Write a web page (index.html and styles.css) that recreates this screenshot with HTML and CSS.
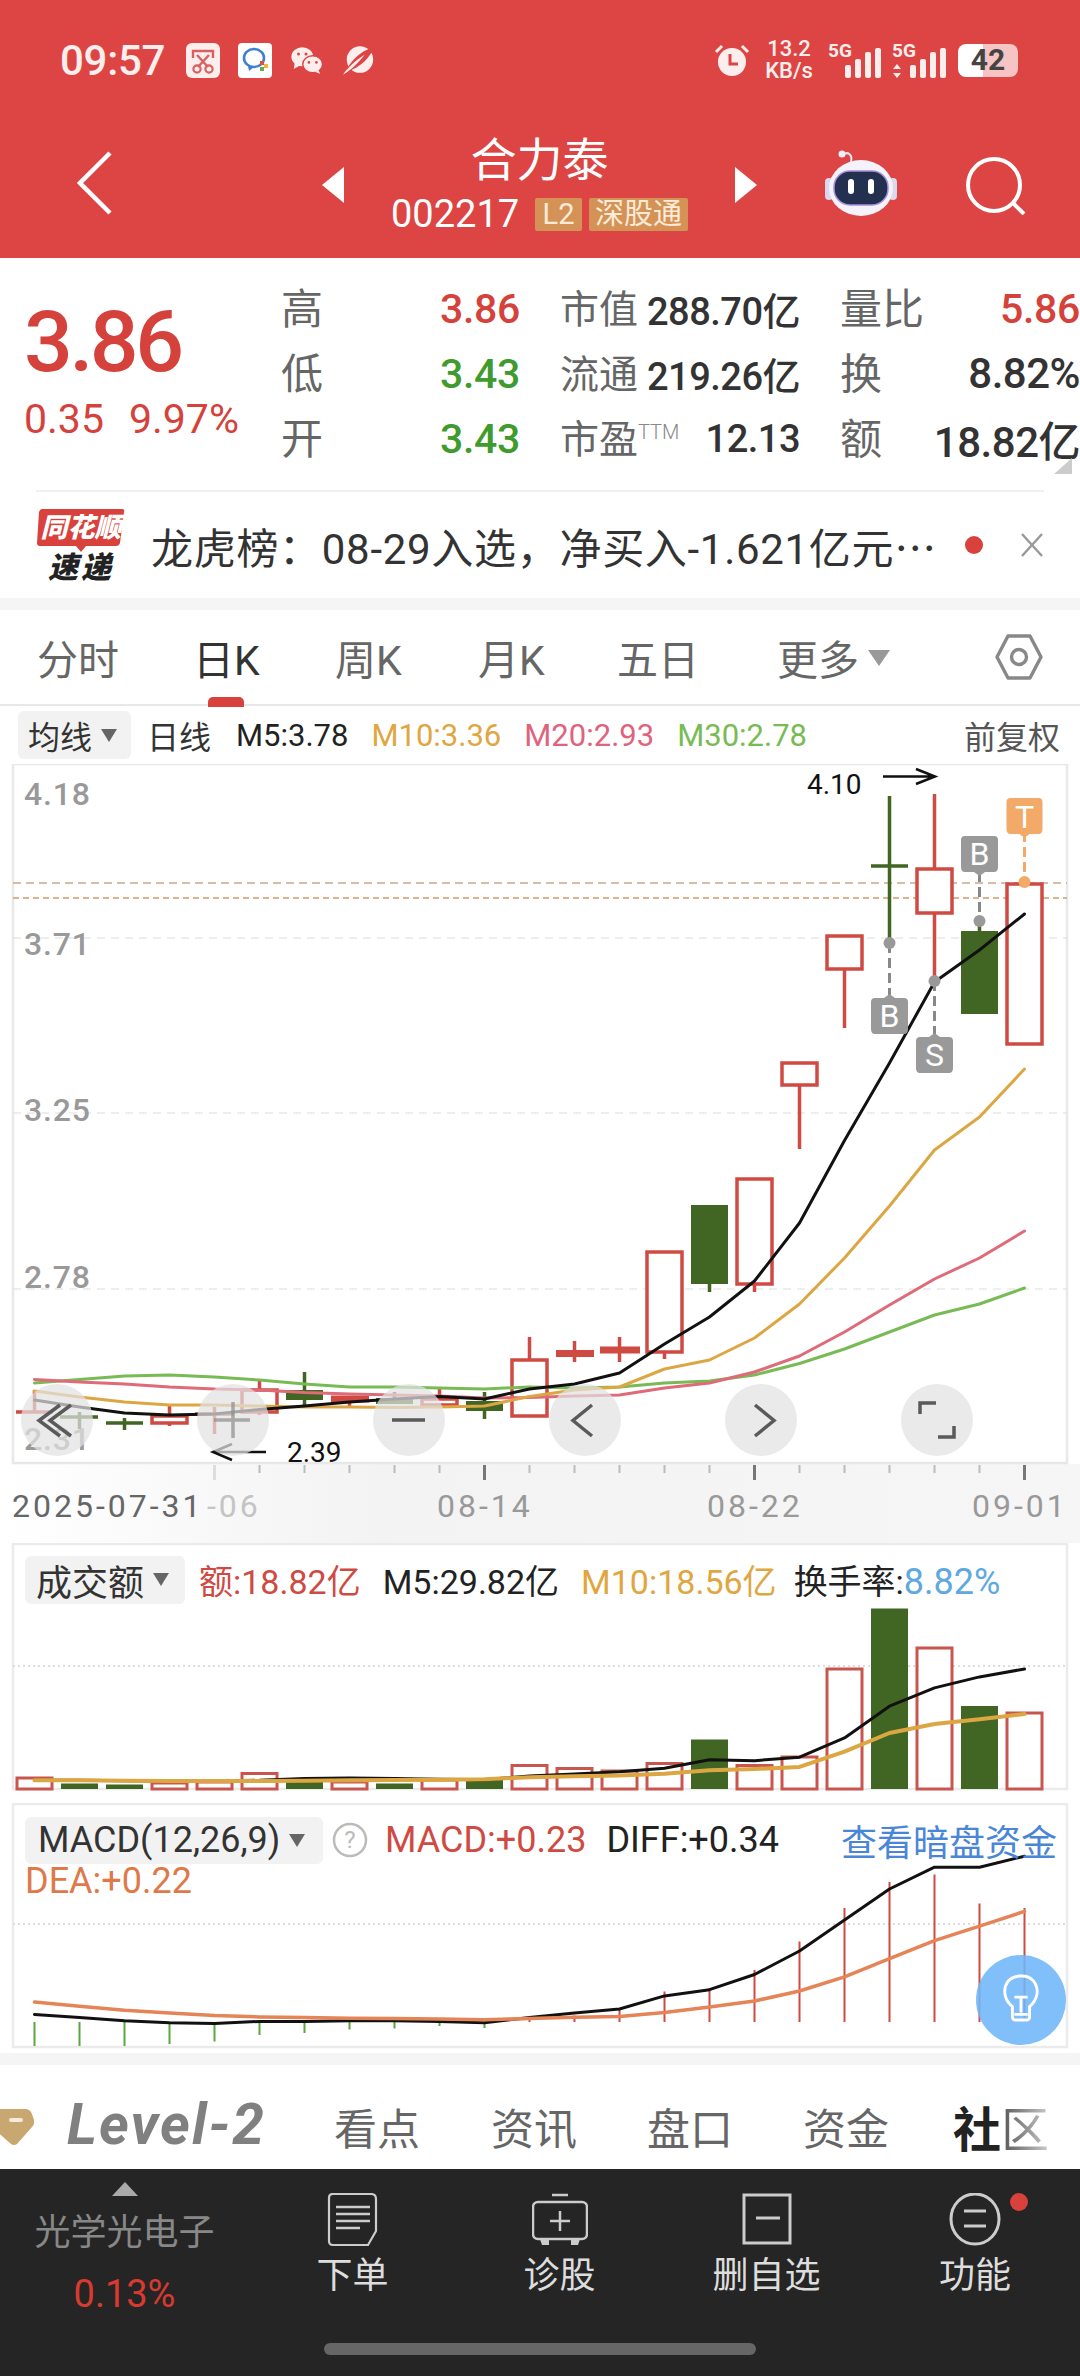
FILE: index.html
```html
<!DOCTYPE html>
<html lang="zh">
<head>
<meta charset="utf-8">
<title>合力泰</title>
<link rel="stylesheet" href="styles.css">
</head>
<body>
<div class="page">

<header class="top">
  <div class="status">
    <div class="status-left">
      <span class="time">09:57</span>
      <svg class="ic34" viewBox="0 0 34 35"><rect width="34" height="35" rx="6" fill="#fdeeee"/><path d="M7 15V8h20v7" fill="none" stroke="#d9605e" stroke-width="2.4"/><path d="M11 12l11 12M23 12L12 24" stroke="#d9605e" stroke-width="2.4"/><circle cx="11" cy="26" r="3.6" fill="none" stroke="#d9605e" stroke-width="2.2"/><circle cx="23" cy="26" r="3.6" fill="none" stroke="#d9605e" stroke-width="2.2"/></svg>
      <svg class="ic34 gap-l" viewBox="0 0 34 35"><rect width="34" height="35" rx="4" fill="#fff"/><ellipse cx="16" cy="15" rx="10" ry="9" fill="none" stroke="#3f7fd0" stroke-width="2.6"/><path d="M10 23l1 5 5-4" fill="#3f7fd0"/><rect x="22" y="18" width="4" height="4" fill="#e0503f"/><rect x="26" y="21" width="4" height="4" fill="#f0b93a"/><rect x="22" y="24" width="4" height="4" fill="#5fae55"/></svg>
      <svg class="ic34 gap-m" viewBox="0 0 36 30"><ellipse cx="13" cy="11" rx="11.5" ry="10" fill="#fdeeee"/><path d="M5 17l-1 7 7-4z" fill="#fdeeee"/><ellipse cx="24" cy="19" rx="10.5" ry="9" fill="#fdeeee" stroke="#dc4543" stroke-width="1.5"/><path d="M30 25l2 4-6-2z" fill="#fdeeee"/><circle cx="9" cy="8" r="1.6" fill="#dc4543"/><circle cx="17" cy="8" r="1.6" fill="#dc4543"/><circle cx="20" cy="17" r="1.4" fill="#dc4543"/><circle cx="28" cy="17" r="1.4" fill="#dc4543"/></svg>
      <svg class="ic34 gap-m" viewBox="0 0 36 36"><circle cx="19" cy="17" r="14" fill="#fdeeee"/><path d="M4 30C8 20 18 8 34 4 30 14 20 26 4 30z" fill="#dc4543"/><path d="M1 33C6 26 14 18 24 12 18 20 10 28 1 33z" fill="#fdeeee"/></svg>
    </div>
    <div class="status-right">
      <svg class="alarm" viewBox="0 0 36 34"><circle cx="18" cy="19" r="14" fill="#fdeeee"/><path d="M16 11v10h8" fill="none" stroke="#dc4543" stroke-width="3"/><path d="M2 9l6-6M34 9l-6-6" stroke="#fdeeee" stroke-width="3"/></svg>
      <div class="speed"><span>13.2</span><span>KB/s</span></div>
      <svg class="signal" viewBox="0 -10 56 46"><text class="net" x="0" y="15">5G</text><rect x="17" y="23" width="6" height="13" rx="2"/><rect x="27" y="17" width="6" height="19" rx="2"/><rect x="37" y="10" width="6" height="26" rx="2"/><rect x="47" y="6" width="6" height="30" rx="2"/></svg>
      <svg class="signal s2" viewBox="0 -10 58 46"><text class="net" x="0" y="15">5G</text><path d="M5 22l4 5H1zM5 36l4-5H1z"/><rect x="18" y="23" width="6" height="13" rx="2"/><rect x="28" y="17" width="6" height="19" rx="2"/><rect x="38" y="10" width="6" height="26" rx="2"/><rect x="48" y="6" width="6" height="30" rx="2"/></svg>
      <div class="battery"><span class="batt-num">42</span></div>
    </div>
  </div>
  <nav class="nav">
    <div class="nav-left">
      <svg class="back" viewBox="0 0 36 64"><path d="M33 2L3 32l30 30" fill="none" stroke="#fff" stroke-width="4.5"/></svg>
    </div>
    <div class="nav-mid">
      <i class="tri-l"></i>
      <div class="stock">
        <div class="stock-name">合力泰</div>
        <div class="stock-code"><span class="code">002217</span><span class="tag tag-l2">L2</span><span class="tag">深股通</span></div>
      </div>
      <i class="tri-r"></i>
    </div>
    <div class="nav-right">
      <svg class="robot" viewBox="0 0 72 66">
        <path d="M26 12c2-8-4-10-6-8" fill="none" stroke="#eee6f5" stroke-width="2"/><circle cx="17" cy="4" r="3.5" fill="#f2eef8"/>
        <rect x="0" y="28" width="8" height="22" rx="4" fill="#dcd8ee"/><rect x="64" y="28" width="8" height="22" rx="4" fill="#dcd8ee"/>
        <ellipse cx="36" cy="38" rx="32" ry="28" fill="#f4f2fa"/>
        <rect x="9" y="21" width="54" height="34" rx="16" fill="#24304f" stroke="#a68fe0" stroke-width="1.5"/>
        <rect x="23" y="29" width="6" height="15" rx="3" fill="#fff"/><rect x="43" y="29" width="6" height="15" rx="3" fill="#fff"/>
      </svg>
      <svg class="search" viewBox="0 0 60 58"><circle cx="28" cy="28" r="26" fill="none" stroke="#fff" stroke-width="4"/><path d="M47 46l11 11" stroke="#fff" stroke-width="4"/></svg>
    </div>
  </nav>
</header>

<section class="quote">
  <div class="price-box">
    <div class="price">3.86</div>
    <div class="change"><span>0.35</span><span>9.97%</span></div>
  </div>
  <div class="quote-grid">
    <div class="cell"><span class="lbl">高</span><b class="up">3.86</b></div>
    <div class="cell"><span class="lbl sm">市值</span><b>288.70亿</b></div>
    <div class="cell"><span class="lbl">量比</span><b class="up">5.86</b></div>
    <div class="cell"><span class="lbl">低</span><b class="down">3.43</b></div>
    <div class="cell"><span class="lbl sm">流通</span><b>219.26亿</b></div>
    <div class="cell"><span class="lbl">换</span><b class="wide">8.82%</b></div>
    <div class="cell"><span class="lbl">开</span><b class="down">3.43</b></div>
    <div class="cell"><span class="lbl sm">市盈<sup class="ttm">TTM</sup></span><b>12.13</b></div>
    <div class="cell"><span class="lbl">额</span><b class="wide">18.82亿</b></div>
  </div>
  <i class="corner"></i>
</section>

<section class="news">
  <svg class="news-logo" viewBox="0 0 88 84">
    <path d="M5 0h80q3 0 2 3l-4 31q-1 3-4 3H49l-5 6-5-6H3q-3 0-3-3L2 3q1-3 3-3z" fill="#d8413c"/>
    <text class="logo-a" x="44" y="28" text-anchor="middle">同花顺</text>
    <text class="logo-b" x="44" y="69" text-anchor="middle">速递</text>
  </svg>
  <div class="news-text">龙虎榜：08-29入选，净买入-1.621亿元<span class="ell">…</span></div>
  <i class="news-dot"></i>
  <svg class="news-x" viewBox="0 0 24 24"><path d="M2 1l20 22M22 1L2 23" stroke="#999" stroke-width="2.4" fill="none"/></svg>
</section>

<div class="band"></div>

<nav class="tabs">
  <span class="tab">分时</span>
  <span class="tab active">日K</span>
  <span class="tab">周K</span>
  <span class="tab">月K</span>
  <span class="tab">五日</span>
  <span class="tab more">更多<i class="tri-more"></i></span>
  <svg class="hex" viewBox="0 0 48 46"><path d="M13 2h22l11 21-11 21H13L2 23z" fill="none" stroke="#888" stroke-width="3.4" stroke-linejoin="round"/><circle cx="24" cy="23" r="7.5" fill="none" stroke="#888" stroke-width="3.4"/></svg>
</nav>

<div class="ma-row">
  <span class="chip chip-ma">均线<i class="tri-sm"></i></span>
  <span class="ma-day">日线</span>
  <span class="ma m5">M5:3.78</span>
  <span class="ma m10">M10:3.36</span>
  <span class="ma m20">M20:2.93</span>
  <span class="ma m30">M30:2.78</span>
  <span class="ma-adj">前复权</span>
</div>

<svg class="chart main-chart" viewBox="0 764 1080 779">
  <defs><linearGradient id="axisbg" x1="0" x2="1" y1="0" y2="0"><stop offset="0" stop-color="#fff"/><stop offset=".35" stop-color="#f3f3f3"/><stop offset="1" stop-color="#f6f6f6"/></linearGradient></defs>
  <rect class="axis-bg" x="0" y="1464" width="1080" height="79"/>
  <rect class="frame" x="13" y="764" width="1054" height="699"/>
  <path class="grid" d="M13 938H1067M13 1113H1067M13 1289H1067"/>
  <path class="ref-a" d="M13 883H1067"/><path class="ref-b" d="M13 898H1067"/>

  <text class="yl" x="24" y="805">4.18</text>
  <text class="yl" x="24" y="955">3.71</text>
  <text class="yl" x="24" y="1121">3.25</text>
  <text class="yl" x="24" y="1288">2.78</text>
  <text class="yl" x="24" y="1450">2.31</text>

  <!-- candles -->
  <g class="wick-r">
    <path d="M34.5 1390V1412M16 1412H53"/>
    <path d="M169.5 1405V1426M214.5 1407V1434M195 1414H234M259.5 1381V1415M349.5 1396V1407M439.5 1389V1405M529.5 1337V1360"/>
    <path d="M574.5 1341V1362M619.5 1337V1362M664.5 1352V1359M754.5 1284V1292M799.5 1085V1149M844.5 969V1028M934.5 794V981"/>
    <path class="thick" d="M556 1353.5H594M600 1350H640M331 1399H369"/>
  </g>
  <g class="wick-g">
    <path d="M79.5 1412V1429M60 1417H98M124.5 1418V1430M106 1423H143M304.5 1372V1405M394.5 1392V1404M484.5 1392V1419M709.5 1284V1292M889.5 796V943M871 866H908M979.5 920V932"/>
  </g>
  <rect class="c-r" x="152" y="1416" width="35" height="7"/>
  <rect class="c-r" x="242" y="1390" width="35" height="22"/>
  <rect class="c-r" x="422" y="1399" width="35" height="6"/>
  <rect class="c-r" x="512" y="1360" width="35" height="56"/>
  <rect class="c-r" x="647" y="1252" width="35" height="100"/>
  <rect class="c-r" x="737" y="1179" width="35" height="105"/>
  <rect class="c-r" x="782" y="1063" width="35" height="22"/>
  <rect class="c-r" x="827" y="936" width="35" height="33"/>
  <rect class="c-r" x="917" y="869" width="35" height="44"/>
  <rect class="c-r" x="1007" y="884" width="35" height="160"/>
  <rect class="c-g" x="286" y="1390" width="37" height="10"/>
  <rect class="c-g" x="376" y="1398" width="37" height="6"/>
  <rect class="c-g" x="466" y="1401" width="37" height="10"/>
  <rect class="c-g" x="691" y="1205" width="37" height="79"/>
  <rect class="c-g" x="961" y="931" width="37" height="83"/>

  <!-- moving averages -->
  <polyline class="ma-l l-green" points="34.5,1383 79.5,1379.5 124.5,1376 169.5,1375 214.5,1377 259.5,1380 304.5,1384 349.5,1387 394.5,1387 439.5,1388 484.5,1389 529.5,1387 574.5,1388 619.5,1387 664.5,1383 709.5,1381 754.5,1375 799.5,1363.5 844.5,1349 889.5,1332 934.5,1315 979.5,1304 1024.5,1288"/>
  <polyline class="ma-l l-pink" points="34.5,1379.5 79.5,1382 124.5,1384 169.5,1387 214.5,1389 259.5,1390 304.5,1392.6 349.5,1394 394.5,1395 439.5,1396 484.5,1398 529.5,1397.5 574.5,1396 619.5,1395 664.5,1388 709.5,1383 754.5,1372 799.5,1356 844.5,1332 889.5,1305 934.5,1279 979.5,1258 1024.5,1231"/>
  <polyline class="ma-l l-gold" points="34.5,1391 79.5,1397 124.5,1402 169.5,1405 214.5,1405 259.5,1406 304.5,1407 349.5,1407 394.5,1407.6 439.5,1407 484.5,1406 529.5,1396.5 574.5,1390 619.5,1387 664.5,1369 709.5,1360 754.5,1338 799.5,1304 844.5,1258 889.5,1206 934.5,1150 979.5,1117 1024.5,1069"/>
  <polyline class="ma-l l-black" points="34.5,1400 79.5,1407 124.5,1413 169.5,1415 214.5,1414 259.5,1409.5 304.5,1406 349.5,1402 394.5,1399 439.5,1396.5 484.5,1399 529.5,1389 574.5,1384 619.5,1373 664.5,1344 709.5,1317 754.5,1281 799.5,1223 844.5,1140.5 889.5,1063 934.5,982 979.5,950 1024.5,914"/>

  <!-- trade markers -->
  <g class="mark">
    <path class="mark-dash" d="M889.5 943V998M934.5 981V1037M979.5 872V921"/>
    <circle cx="889.5" cy="943" r="6"/><circle cx="934.5" cy="981" r="6"/><circle cx="979.5" cy="921" r="6"/>
    <path d="M871 1002q0-4 4-4h9l5.500-4 5.500 4h9q4 0 4 4v27q0 5-4 5H875q-4 0-4-5z"/>
    <path d="M916 1041q0-4 4-4h9l5.500-4 5.500 4h9q4 0 4 4v27q0 5-4 5H920q-4 0-4-5z"/>
    <path d="M961 840q0-4 4-4h29q4 0 4 4v27q0 5-4 5h-9l-5.500 4-5.500-4h-9q-4 0-4-5z"/>
  </g>
  <g class="mark-t">
    <path class="mark-dash-t" d="M1024.500 832V882"/>
    <circle cx="1024.500" cy="882" r="6"/>
    <path d="M1006.500 802q0-4 4-4h28q4 0 4 4v27q0 5-4 5h-9l-5 4-5-4h-9q-4 0-4-5z"/>
  </g>
  <text class="mark-txt" x="889.500" y="1027" text-anchor="middle">B</text>
  <text class="mark-txt" x="934.500" y="1066" text-anchor="middle">S</text>
  <text class="mark-txt" x="979.500" y="865" text-anchor="middle">B</text>
  <text class="mark-txt" x="1024.500" y="828" text-anchor="middle">T</text>

  <text class="extreme" x="807" y="794">4.10</text>
  <path class="arrow" d="M883 776.500H934M916 769l19 7.500-19 7.500"/>
  <text class="extreme" x="287" y="1462">2.39</text>
  <path class="arrow" d="M213 1452H266M232 1444l-19 8 19 8"/>

  <!-- chart overlay buttons -->
  <g class="ctl">
    <circle cx="57" cy="1420" r="36"/><circle cx="233" cy="1420" r="36"/><circle cx="409" cy="1420" r="36"/>
    <circle cx="585" cy="1420" r="36"/><circle cx="761" cy="1420" r="36"/><circle cx="937" cy="1420" r="36"/>
  </g>
  <path class="ctl-i" d="M60 1405L39 1420.500l21 15.500M71 1405L50 1420.500l21 15.500"/>
  <path class="ctl-i soft" d="M214 1420H250M233 1402V1438"/>
  <path class="ctl-i" d="M392 1420H425M592 1405L573 1420.500l19 15.500M755 1405L774 1420.500l-19 15.500M920 1414V1403H936M954 1426V1437H938"/>

  <!-- date axis -->
  <path class="tick" d="M259.500 1465V1473M304.500 1465V1473M349.500 1465V1473M394.500 1465V1473M439.500 1465V1473M529.500 1465V1473M574.500 1465V1473M619.500 1465V1473M664.500 1465V1473M709.500 1465V1473M799.500 1465V1473M844.500 1465V1473M889.500 1465V1473M934.500 1465V1473M979.500 1465V1473"/>
  <path class="tick faint" d="M214.500 1465V1480"/>
  <path class="tick major" d="M484.500 1465V1480M754.500 1465V1480M1024.500 1465V1480"/>
  <text class="dt dt-soft" x="207" y="1517">-06</text>
  <text class="dt dt-first" x="12" y="1517">2025-07-31</text>
  <text class="dt" x="437" y="1517">08-14</text>
  <text class="dt" x="707" y="1517">08-22</text>
  <text class="dt" x="972" y="1517">09-01</text>
</svg>

<section class="panel">
  <svg class="chart vol-chart" viewBox="0 1543 1080 260">
    <rect class="frame thin" x="13" y="1544" width="1054" height="245"/>
    <path class="dots" d="M13 1666H1067"/>
    <g class="vol-r">
      <rect x="17" y="1778" width="35" height="11"/><rect x="152" y="1783" width="35" height="6"/><rect x="197" y="1782" width="35" height="7"/><rect x="242" y="1773.500" width="35" height="15.500"/>
      <rect x="332" y="1782" width="35" height="7"/><rect x="422" y="1780" width="35" height="9"/><rect x="512" y="1765.500" width="35" height="23.500"/><rect x="557" y="1768.500" width="35" height="20.500"/>
      <rect x="602" y="1771" width="35" height="18"/><rect x="647" y="1763.500" width="35" height="25.500"/><rect x="737" y="1765.500" width="35" height="23.500"/><rect x="782" y="1757" width="35" height="32"/>
      <rect x="827" y="1669" width="35" height="120"/><rect x="917" y="1648" width="35" height="141"/><rect x="1007" y="1713" width="35" height="76"/>
    </g>
    <g class="vol-g">
      <rect x="61" y="1783.500" width="37" height="5.500"/><rect x="106" y="1784.500" width="37" height="4.500"/><rect x="286" y="1780.500" width="37" height="8.500"/><rect x="376" y="1783.500" width="37" height="5.500"/><rect x="466" y="1780" width="37" height="9"/>
      <rect x="691" y="1739.500" width="37" height="49.500"/><rect x="871" y="1608.500" width="37" height="180.500"/><rect x="961" y="1706" width="37" height="83"/>
    </g>
    <polyline class="ma-l l-black" points="34.5,1780.300 79.5,1780.300 124.5,1780.700 169.5,1781 214.5,1781 259.5,1780.300 304.5,1778.600 349.5,1778 394.5,1778.600 439.5,1779.300 484.5,1779.700 529.5,1775.900 574.5,1774 619.5,1771.700 664.5,1768.300 709.5,1759.700 754.5,1760.700 799.5,1757.200 844.5,1737.900 889.5,1706.200 934.5,1687.900 979.5,1676.900 1024.5,1669"/>
    <polyline class="ma-l l-gold2" points="34.5,1780.300 79.5,1780.300 124.5,1780.700 169.5,1781 214.5,1781 259.5,1781 304.5,1780.700 349.5,1780.300 394.5,1780 439.5,1779.700 484.5,1779.300 529.5,1777.200 574.5,1776.200 619.5,1775.500 664.5,1773.800 709.5,1770.300 754.5,1769 799.5,1766.900 844.5,1751.700 889.5,1733 934.5,1724 979.5,1719.300 1024.5,1714.100"/>
  </svg>
  <div class="panel-head head-vol">
    <span class="chip chip-vol">成交额<i class="tri-sm"></i></span>
    <span class="hd red">额:18.82亿</span>
    <span class="hd">M5:29.82亿</span>
    <span class="hd gold">M10:18.56亿</span>
    <span class="hd">换手率:<span class="sky">8.82%</span></span>
  </div>
</section>

<section class="panel">
  <svg class="chart macd-chart" viewBox="0 1803 1080 250">
    <rect class="frame thin" x="13" y="1804" width="1054" height="243"/>
    <path class="dots" d="M13 1924H1067"/>
    <path class="bar-g" d="M34.500 2022V2046M79.500 2022V2046M124.500 2022V2046M169.500 2022V2044M214.500 2022V2041.500M259.500 2022V2035M304.500 2022V2033M349.500 2022V2029.500M394.500 2022V2028.500M439.500 2022V2026M484.500 2022V2028"/>
    <path class="bar-r" d="M529.500 2022V2018M574.500 2022V2015.500M619.500 2022V2009.500M664.500 2022V1991.500M709.500 2022V1988M754.500 2022V1970M799.500 2022V1941.500M844.500 2022V1908M889.500 2022V1882M934.500 2022V1874.500M979.500 2022V1903.500M1024.500 2022V1908"/>
    <polyline class="ma-l l-black" points="34.5,2014.500 79.5,2017.600 124.5,2020.700 169.5,2022.800 214.5,2023.400 259.5,2021.400 304.5,2021.400 349.5,2020.700 394.5,2020.700 439.5,2021.400 484.5,2022.800 529.5,2017.600 574.5,2013.100 619.5,2009 664.5,1995.900 709.5,1989.700 754.5,1974.500 799.5,1951 844.5,1920 889.5,1889 934.5,1867.200 979.5,1867.200 1024.5,1856.200"/>
    <polyline class="ma-l l-orange" points="34.5,2002 79.5,2006.200 124.5,2010.300 169.5,2013.100 214.5,2015.500 259.5,2016.900 304.5,2017.600 349.5,2018.300 394.5,2018.600 439.5,2019 484.5,2019.700 529.5,2018.600 574.5,2017.200 619.5,2016.600 664.5,2012.400 709.5,2006.900 754.5,2001 799.5,1991 844.5,1976.900 889.5,1958.600 934.5,1940.700 979.5,1926.200 1024.5,1911.400"/>
  </svg>
  <div class="panel-head head-macd">
    <span class="chip chip-macd">MACD(12,26,9)<i class="tri-sm"></i></span>
    <svg class="help" viewBox="0 0 36 36"><circle cx="18" cy="18" r="16" fill="none" stroke="#bbb" stroke-width="2.500"/><text class="help-q" x="18" y="26" text-anchor="middle">?</text></svg>
    <span class="hd red">MACD:+0.23</span>
    <span class="hd">DIFF:+0.34</span>
    <span class="hd blue">查看暗盘资金</span>
  </div>
  <div class="dea">DEA:+0.22</div>
  <div class="bulb">
    <svg viewBox="0 0 44 60"><path d="M13 37C4 30 3 18 8 11s20-9 27-1c7 9 4 20-4 27v11a3 3 0 0 1-3 3H16a3 3 0 0 1-3-3z" fill="none" stroke="#fff" stroke-width="3"/><path d="M15 27h14M22 27v16M15 45h14" stroke="#fff" stroke-width="3" fill="none"/></svg>
  </div>
</section>

<div class="band band-low"></div>

<nav class="subtabs">
  <svg class="gem" viewBox="0 0 34 36"><path d="M-6 0H25q5 0 7 5l2 6q1 4-2 7L17 35q-3 2-6 0L-8 18z" fill="#c9a770"/><rect x="9" y="9" width="14" height="4" rx="2" fill="#f5ecd8"/></svg>
  <span class="level">Level-2</span>
  <span class="subtab s-a">看点</span>
  <span class="subtab s-b">资讯</span>
  <span class="subtab s-c">盘口</span>
  <span class="subtab s-d">资金</span>
  <span class="subtab s-e"><b>社</b><span class="fade">区</span></span>
</nav>

<footer class="dock">
  <div class="dock-row">
    <div class="dock-stock">
      <i class="tri-up"></i>
      <div class="dock-name">光学光电子</div>
      <div class="dock-pct">0.13%</div>
    </div>
    <div class="dock-item">
      <svg class="dock-ic" viewBox="0 0 56 54"><path d="M8 1h38q5 0 5 5v32l-8 14H8q-4 0-4-4V5q0-4 4-4z" fill="none" stroke="#ccc" stroke-width="2.200"/><path d="M11 14h34M11 21h34M11 28h34M11 35h24" stroke="#ccc" stroke-width="2.500"/></svg>
      <span>下单</span>
    </div>
    <div class="dock-item">
      <svg class="dock-ic" viewBox="0 0 56 54"><path d="M20 2h16" stroke="#ccc" stroke-width="2.500"/><rect x="1" y="9" width="54" height="37" rx="5" fill="none" stroke="#ccc" stroke-width="2.500"/><path d="M28 18v20M18 28h20" stroke="#ccc" stroke-width="2.500"/><path d="M8 46h9v6H10zM39 46h9l-2 6h-7z" fill="#ccc"/></svg>
      <span>诊股</span>
    </div>
    <div class="dock-item">
      <svg class="dock-ic" viewBox="0 0 56 54"><rect x="5" y="2" width="46" height="48" fill="none" stroke="#ccc" stroke-width="3"/><path d="M17 25h24" stroke="#ccc" stroke-width="3"/></svg>
      <span>删自选</span>
    </div>
    <div class="dock-item">
      <span class="dock-badge"></span>
      <svg class="dock-ic" viewBox="0 0 56 54"><ellipse cx="28" cy="26" rx="24" ry="25" fill="none" stroke="#ccc" stroke-width="3"/><path d="M17 18h22M17 33h22" stroke="#ccc" stroke-width="3"/></svg>
      <span>功能</span>
    </div>
  </div>
  <div class="pill"></div>
</footer>

</div>
</body>
</html>
```

FILE: styles.css
```css
* { box-sizing: border-box; }
html, body { margin: 0; padding: 0; }
body { background: #fff; font-family: Roboto, "Noto Sans CJK SC", sans-serif; color: #333; }
.page { width: 1080px; height: 2376px; overflow: hidden; }
i { display: block; font-style: normal; }
svg { display: block; flex: none; }

/* header */
.top { height: 258px; background: #dc4543; color: #fff; }
.status { height: 120px; display: flex; justify-content: space-between; align-items: center; padding: 0 62px 0 60px; color: #fdeeee; }
.status-left, .status-right { display: flex; align-items: center; }
.time { font-size: 42px; font-weight: 500; width: 126px; white-space: nowrap; letter-spacing: -.3px; }
.ic34 { width: 34px; height: 35px; }
.gap-l { margin-left: 18px; }
.gap-m { margin-left: 18px; }
.alarm { width: 36px; height: 34px; }
.speed { display: flex; flex-direction: column; align-items: center; font-size: 22px; font-weight: 500; line-height: 22px; margin-left: 13px; width: 52px; }
.signal { width: 56px; height: 46px; margin: -10px 0 0 13px; fill: #fdeeee; }
.signal.s2 { width: 58px; margin-left: 8px; }
.net { font-size: 19px; font-weight: 700; font-family: Roboto, sans-serif; }
.battery { width: 60px; height: 33px; margin-left: 8px; border-radius: 8px; background: linear-gradient(90deg, #fff 0 42%, #f6c4c3 42% 100%); display: flex; align-items: center; justify-content: center; }
.batt-num { font-size: 30px; font-weight: 700; color: #444; line-height: 1; }

.nav { height: 138px; display: grid; grid-template-columns: 322px 435px 1fr; }
.nav-left { padding: 31px 0 0 77px; }
.back { width: 36px; height: 64px; }
.nav-mid { display: flex; justify-content: space-between; align-items: flex-start; }
.tri-l { margin-top: 47px; width: 0; height: 0; border-style: solid; border-width: 18px 22px 18px 0; border-color: transparent #fff transparent transparent; }
.tri-r { margin-top: 47px; width: 0; height: 0; border-style: solid; border-width: 18px 0 18px 22px; border-color: transparent transparent transparent #fff; }
.stock { display: flex; flex-direction: column; align-items: center; padding-top: 12px; }
.stock-name { font-size: 46px; line-height: 56px; }
.stock-code { display: flex; align-items: center; margin-top: 4px; }
.code { font-size: 38px; line-height: 44px; width: 144px; }
.tag { height: 33px; padding: 0 6px; margin-left: 7px; background: #d49256; border-radius: 2px; font-size: 29px; line-height: 33px; color: #fdebd8; }
.tag-l2 { width: 47px; text-align: center; margin-left: 0; padding: 0; }
.nav-right { display: flex; align-items: flex-start; padding: 30px 0 0 68px; }
.robot { width: 72px; height: 66px; }
.search { width: 60px; height: 58px; margin: 7px 0 0 69px; }

/* quote */
.quote { position: relative; height: 232px; display: flex; }
.price-box { width: 281px; padding: 34px 0 0 24px; }
.price { font-size: 86px; line-height: 100px; font-weight: 500; color: #d4423b; letter-spacing: -3.500px; }
.change { display: flex; gap: 25px; margin-top: 3px; font-size: 41px; line-height: 48px; color: #d4423b; }
.quote-grid { padding-top: 18px; height: 213px; display: grid; grid-template-columns: 239px 240px 240px; column-gap: 40px; grid-auto-rows: 65px; }
.cell { display: flex; justify-content: space-between; align-items: center; }
.cell b { font-weight: 500; font-size: 38px; color: #333; letter-spacing: -.5px; white-space: nowrap; }
.cell b.up { color: #d4423b; font-size: 41px; letter-spacing: -.3px; }
.cell b.down { color: #3f9b2e; font-size: 41px; letter-spacing: -.3px; }
.cell b.wide { font-size: 42px; letter-spacing: -.5px; }
.lbl { font-size: 42px; color: #666; padding-bottom: 6px; white-space: nowrap; }
.lbl.sm { font-size: 39px; }
.ttm { font-size: 20px; font-weight: 300; vertical-align: 14px; line-height: 0; color: #888; }
.corner { position: absolute; right: 8px; bottom: 16px; width: 0; height: 0; border-style: solid; border-width: 0 0 16px 18px; border-color: transparent transparent #ccc transparent; }

/* news */
.news { height: 108px; margin: 0 36px; border-top: 2px solid #f0f0f0; display: flex; align-items: center; }
.news-logo { width: 88px; height: 84px; margin: 12px 0 0 1px; }
.logo-a { font-size: 27px; font-weight: 900; font-style: italic; fill: #fff; }
.logo-b { font-size: 30px; font-weight: 900; font-style: italic; fill: #222; letter-spacing: 3px; }
.news-text { margin-left: 26px; width: 815px; white-space: nowrap; font-size: 42px; color: #333; letter-spacing: .7px; }
.ell { font-family: "Noto Sans CJK SC", sans-serif; }
.news-dot { width: 18px; height: 18px; border-radius: 50%; background: #d8413c; }
.news-x { width: 24px; height: 24px; margin-left: 37px; }

.band { height: 12px; background: #f5f5f5; }

/* tabs */
.tabs { position: relative; height: 96px; padding-left: 37px; display: grid; grid-template-columns: 156px 142px 143px 139px 160px 218px 48px; align-items: center; border-bottom: 2px solid #e8e8e8; font-size: 41px; color: #666; }
.tab { position: relative; line-height: 60px; padding-top: 8px; }
.tab.active { color: #333; }
.tab.active::after { content: ""; position: absolute; left: 15px; top: 74px; width: 36px; height: 10px; border-radius: 5px 5px 0 0; background: #d8413c; }
.more { display: flex; align-items: center; }
.tri-more { margin: -6px 0 0 9px; width: 0; height: 0; border-style: solid; border-width: 16px 11px 0 11px; border-color: #999 transparent transparent transparent; }
.hex { width: 48px; height: 46px; }

.ma-row { height: 58px; display: flex; align-items: center; padding: 0 20px 0 18px; gap: 23px; font-size: 31px; white-space: nowrap; }
.chip { background: #f2f2f2; border-radius: 6px; display: flex; align-items: center; color: #333; white-space: nowrap; }
.chip-ma { width: 113px; height: 48px; padding-left: 10px; font-size: 32px; margin-right: -7px; }
.tri-sm { margin-left: 9px; width: 0; height: 0; border-style: solid; border-width: 13px 8px 0 8px; border-color: #666 transparent transparent transparent; }
.ma-day { font-size: 32px; width: 66px; color: #333; }
.ma { color: #222; }
.m10 { color: #e0a63f; }
.m20 { color: #e0637e; }
.m30 { color: #78bb55; }
.ma-adj { margin-left: auto; font-size: 32px; color: #555; }

/* charts */
.chart { width: 1080px; }
.main-chart { height: 779px; }
.axis-bg { fill: url(#axisbg); }
.frame { fill: none; stroke: #e8e8e8; stroke-width: 2.500; }
.frame.thin { stroke: #ebebeb; }
.grid { stroke: #ddd; stroke-width: 1.200; stroke-dasharray: 8 6; fill: none; }
.ref-a { stroke: #c9a886; stroke-width: 1.500; stroke-dasharray: 8 5; }
.ref-b { stroke: #d09a68; stroke-width: 1.500; stroke-dasharray: 6 4; }
.yl { font-size: 32px; font-weight: 500; fill: #999; letter-spacing: .8px; }
.wick-r { stroke: #cf4a42; stroke-width: 3.500; fill: none; }
.wick-r .thick { stroke-width: 7; }
.wick-g { stroke: #416623; stroke-width: 3.500; fill: none; }
.c-r { fill: #fff; stroke: #cf4a42; stroke-width: 3.500; }
.c-g { fill: #416623; }
.ma-l { fill: none; stroke-width: 3; stroke-linejoin: round; stroke-linecap: round; }
.l-black { stroke: #111; }
.l-gold { stroke: #dca743; }
.l-gold2 { stroke: #dca743; stroke-width: 4; }
.l-pink { stroke: #df6a78; }
.l-green { stroke: #78bb55; }
.l-orange { stroke: #e58457; stroke-width: 3.500; }
.mark { fill: #999; }
.mark-dash { stroke: #888; stroke-width: 3; stroke-dasharray: 10 5; fill: none; }
.mark-t { fill: #f3aa68; }
.mark-dash-t { stroke: #f3aa68; stroke-width: 3; stroke-dasharray: 10 5; fill: none; }
.mark-txt { font-size: 32px; fill: #fff; }
.extreme { font-size: 28px; fill: #111; }
.arrow { fill: none; stroke: #111; stroke-width: 2.500; }
.ctl circle { fill: rgba(226, 226, 226, .72); }
.ctl-i { fill: none; stroke: #5a5a5a; stroke-width: 3.500; }
.ctl-i.soft { stroke: rgba(140, 140, 140, .7); }
.tick { stroke: #bbb; stroke-width: 2; fill: none; }
.tick.major { stroke: #777; stroke-width: 3; }
.tick.faint { stroke: #ddd; stroke-width: 3; }
.dt { font-size: 32px; fill: #999; letter-spacing: 3px; }
.dt-first { fill: #666; }
.dt-soft { fill: #c4c4c4; }

.panel { position: relative; }
.vol-chart { height: 260px; }
.macd-chart { height: 250px; }
.dots { stroke: #ddd; stroke-width: 2; stroke-dasharray: 2 3; fill: none; }
.vol-r rect { fill: #fff; stroke: #c9564e; stroke-width: 3; }
.vol-g rect { fill: #416623; }
.bar-g { stroke: #5aa83c; stroke-width: 2; fill: none; }
.bar-r { stroke: #cf4a42; stroke-width: 2; fill: none; }

.panel-head { position: absolute; left: 25px; top: 12px; display: flex; align-items: center; font-size: 34px; color: #222; white-space: nowrap; }
.head-vol { gap: 22px; }
.head-vol .gold { margin-right: -5px; }
.chip-vol { width: 160px; height: 48px; padding-left: 11px; margin-right: -8px; font-size: 36px; }
.chip-macd { width: 298px; height: 47px; padding-left: 13px; margin-right: -10px; }
.head-macd { top: 11px; gap: 0; font-size: 36px; }
.help { width: 36px; height: 36px; margin: 0 17px 0 19px; }
.help-q { font-size: 24px; fill: #bbb; }
.red { color: #cf4a42; }
.gold { color: #e0a63f; }
.sky { color: #5fa8e0; font-size: 36px; }
.blue { color: #4a86d8; margin-left: 62px; }
.head-macd .red { margin-right: 20px; }
.dea { position: absolute; left: 25px; top: 56px; font-size: 36px; line-height: 44px; color: #e0794a; }
.bulb { position: absolute; left: 976px; top: 152px; width: 90px; height: 90px; border-radius: 50%; background: rgba(111, 182, 250, .88); display: flex; align-items: center; justify-content: center; }
.bulb svg { width: 42px; height: 58px; }

.band-low { height: 12px; }

/* sub tabs */
.subtabs { height: 104px; display: flex; align-items: center; position: relative; font-size: 43px; color: #666; white-space: nowrap; }
.gem { width: 34px; height: 36px; margin-top: 20px; overflow: hidden; }
.level { margin: 16px 0 0 33px; width: 267px; font-size: 57px; line-height: 66px; font-weight: 700; font-style: italic; color: #808080; letter-spacing: 2px; }
.subtab { margin-top: 18px; }
.s-a { width: 157px; }
.s-b { width: 156px; }
.s-c { width: 156px; }
.s-d { width: 150px; }
.s-e { display: flex; font-size: 48px; color: #222; }
.s-e b { font-weight: 700; }
.fade { background: linear-gradient(90deg, #555, #ccc); -webkit-background-clip: text; background-clip: text; color: transparent; }

/* dock */
.dock { height: 207px; background: #252525; display: flex; flex-direction: column; }
.dock-row { height: 170px; display: grid; grid-template-columns: 249px 207px 207px 207px 210px; }
.dock-stock { display: flex; flex-direction: column; align-items: center; padding-top: 13px; }
.tri-up { width: 0; height: 0; border-style: solid; border-width: 0 13px 14px 13px; border-color: transparent transparent #aaa transparent; }
.dock-name { margin-top: 15px; font-size: 36px; line-height: 44px; color: #888; }
.dock-pct { margin-top: 17px; font-size: 38px; line-height: 44px; color: #d93a30; }
.dock-item { position: relative; display: flex; flex-direction: column; align-items: center; padding-top: 24px; font-size: 36px; color: #ddd; }
.dock-item span:last-child { margin-top: 7px; line-height: 44px; }
.dock-ic { width: 56px; height: 54px; }
.dock-badge { position: absolute; left: 140px; top: 24px; width: 18px; height: 18px; border-radius: 50%; background: #d8413c; }
.pill { width: 432px; height: 12px; margin: 4px auto 0; border-radius: 6px; background: #666; }
```
